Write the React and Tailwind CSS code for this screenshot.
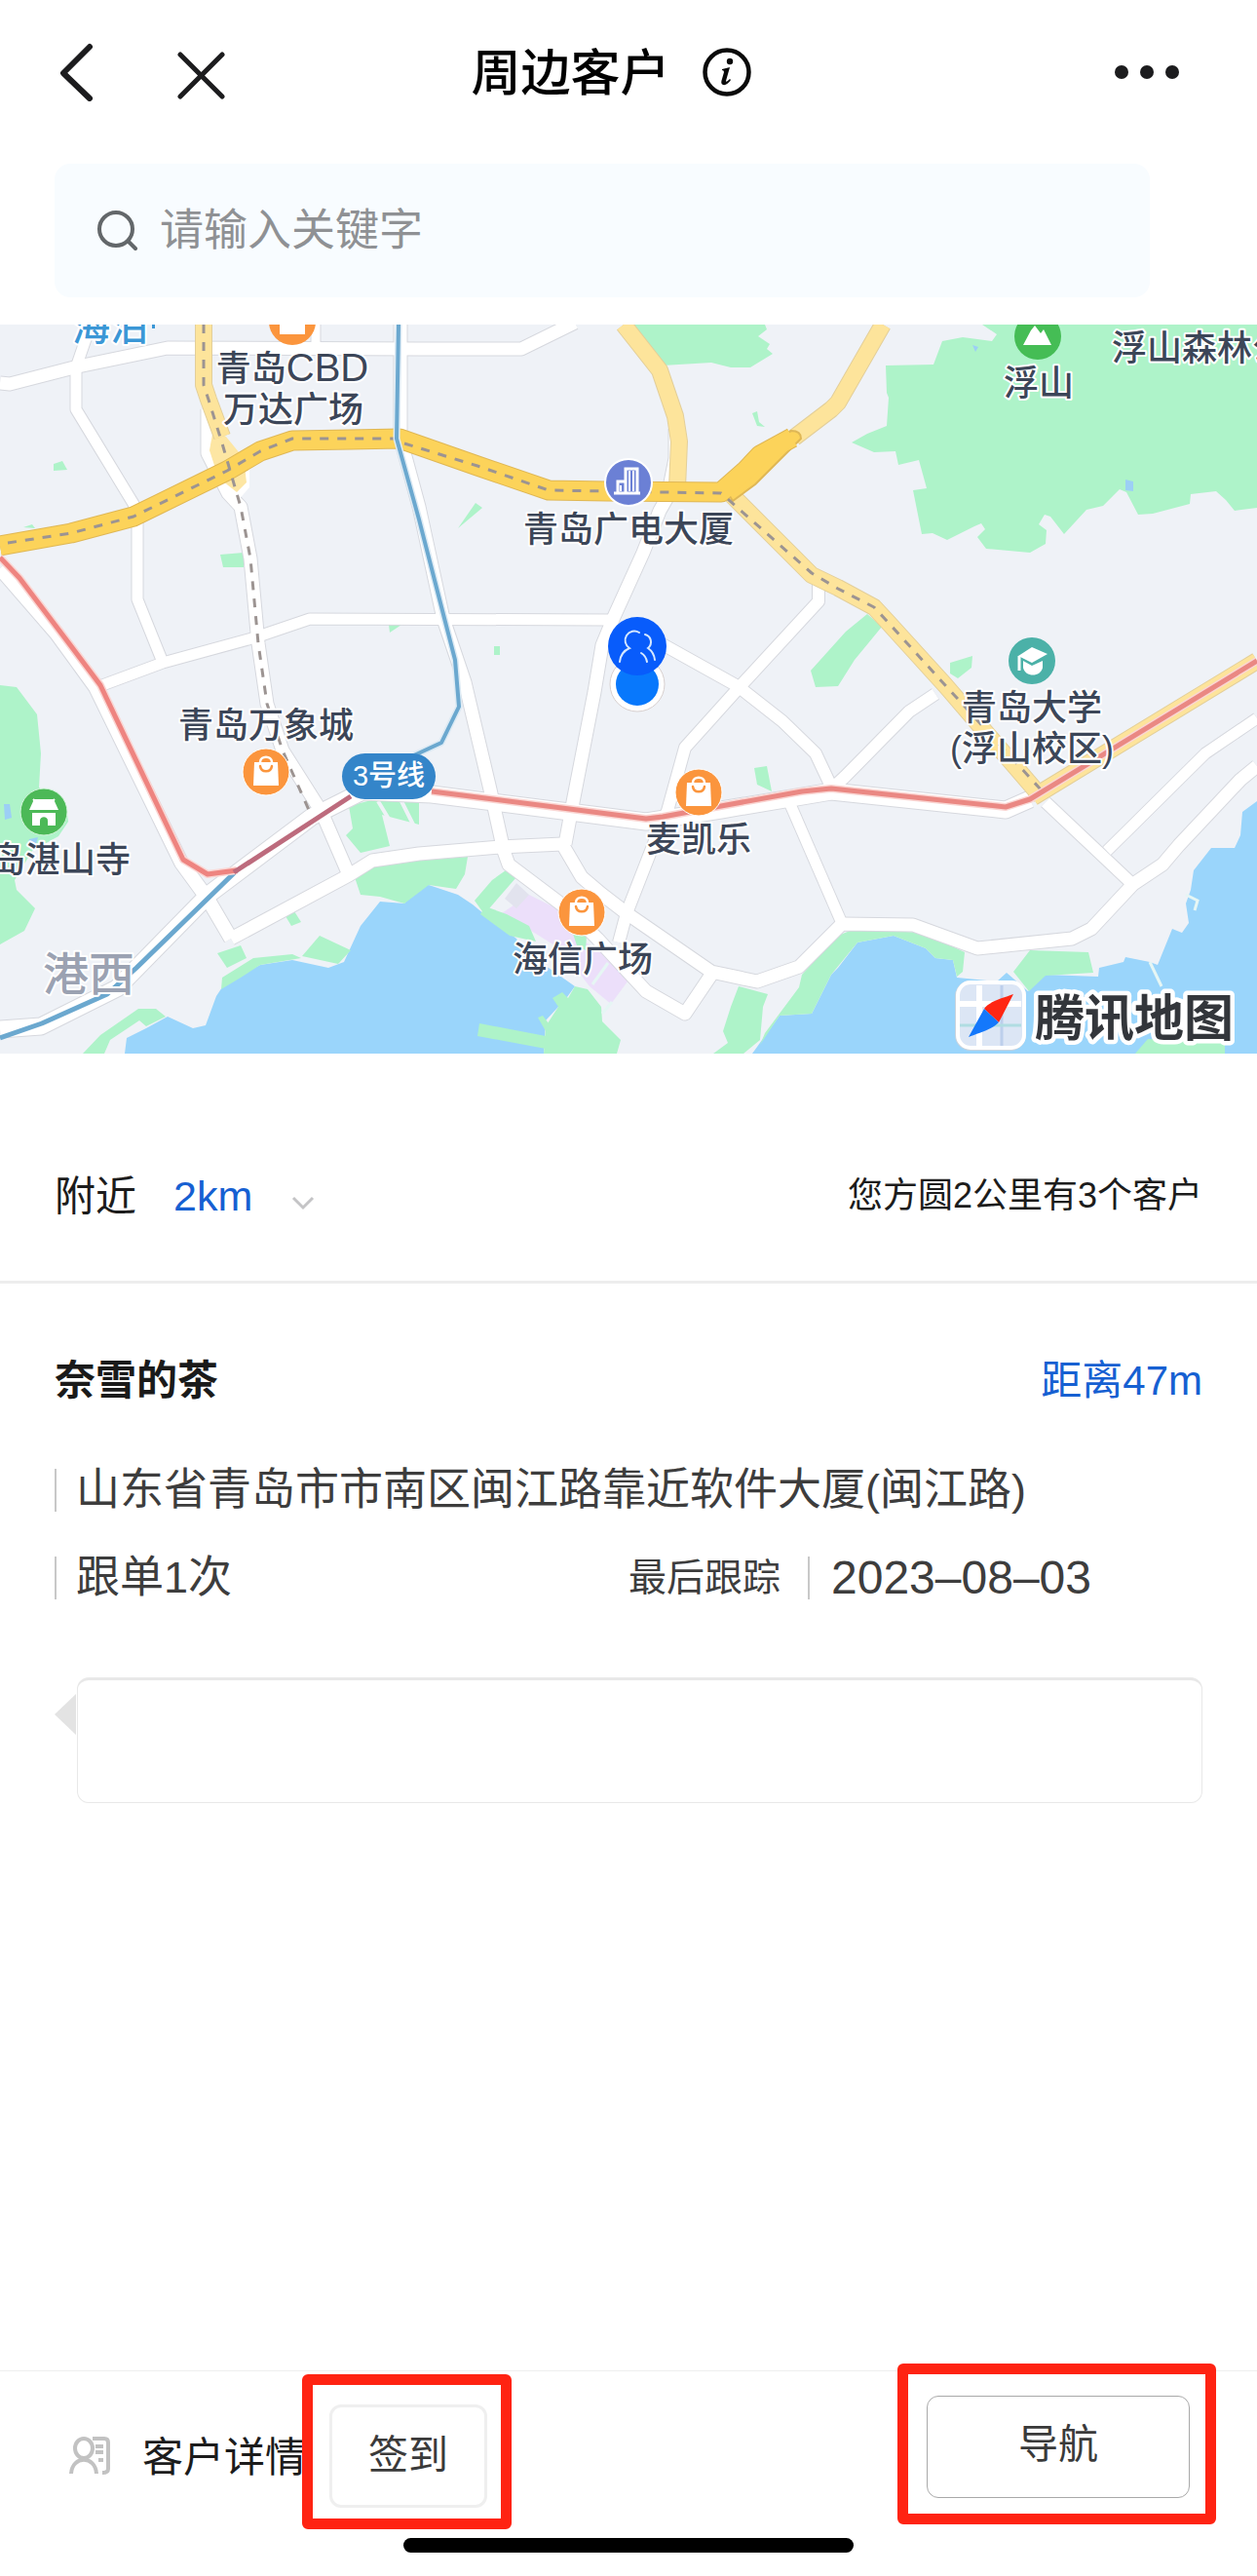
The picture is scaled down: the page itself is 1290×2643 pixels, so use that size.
import React from "react";

const WATER = "#9ad5fb";
const PARK = "#aef3c9";

const waterAreas = [
  "M128 1081L130 1065L150 1055L172 1043L198 1055L211 1052L222 1022L230 1010L267 990L300 985L337 993L353 987L370 950L390 925L415 927L430 910L440 908L470 918L485 928L497 938L530 963L545 985L563 993L590 1012L582 1023L573 1033L560 1047L558 1081Z",
  "M772 1081L800 1042L833 1040L853 1000L860 993L880 967L917 960L950 973L960 983L978 985L982 1003L1023 1007L1033 998L1055 1017L1073 1000L1127 1002L1128 993L1153 987L1155 982L1180 987L1188 990L1203 953L1213 957L1220 947L1217 927L1222 913L1225 893L1243 870L1267 870L1273 857L1275 833L1290 822V1081Z",
];

const parkAreas = [
  "M1008 333L1023 343L1018 350L988 346L967 350L958 374L909 375L910 403L912 408L910 437L890 445L874 454L897 464L919 463L922 477L943 472L951 501L937 503L946 548L957 547L972 554L1000 540L1007 537L1011 543L1003 551L1012 563L1057 567L1073 558L1074 544L1066 538L1072 528L1078 530L1092 548L1115 523L1132 519L1149 502L1156 505L1168 528L1183 527L1221 517L1222 507L1248 504L1258 513L1267 524L1290 521V333Z",
  "M650 333L668 363L680 375L730 372L750 377L770 377L793 363L787 358L790 353L778 345L787 338L785 333Z",
  "M0 703L17 705L38 733L42 773L40 808L68 827L70 843L60 858L33 873L15 903L17 913L36 932L25 955L0 969Z",
  "M85 1081L103 1062L142 1035L160 1035L170 1043L150 1053L143 1047L113 1067L107 1081Z",
  "M358 827L385 820L430 820V846L392 836L400 868L370 875L355 857L362 850Z",
  "M363 897L387 887L430 883L480 879L477 897L468 912L440 908L415 927L390 920L370 918Z",
  "M328 960L360 975L347 989L310 981Z",
  "M223 978L247 970L253 983L233 993Z",
  "M227 1015L228 1003L260 983L300 979L309 983L267 990L247 1003Z",
  "M293 940L302 935L309 946L299 950Z",
  "M519 893L530 900L497 938L487 924L505 903Z",
  "M498 930L520 938L543 950L550 966L523 960L493 938Z",
  "M590 1012L603 1015L617 1033L618 1048L637 1067L633 1081H558L560 1053L573 1033L567 1024L577 1018L583 1024Z",
  "M492 1050L560 1063V1076L490 1063Z",
  "M552 1044L557 1042L566 1054L560 1058Z",
  "M588 958L602 960L601 975L592 970Z",
  "M758 1012L788 1020L783 1033L780 1067L763 1081H732L747 1070L742 1058L750 1033Z",
  "M860 960L823 1000L820 1013L785 1060L780 1072L800 1042L833 1040L853 1000L880 967L917 960L950 973L960 983L978 985L982 1002L988 997L990 977L947 957L877 953Z",
  "M1057 975L1117 977L1122 998L1073 1001L1056 1017L1040 997Z",
  "M1165 1081L1178 1066L1257 1070L1257 1081Z",
  "M55 476L64 473L69 482L55 483Z",
  "M24 541L33 538L36 542Z",
  "M226 569L250 567V582L229 582Z",
  "M399 641H412L400 649Z",
  "M488 516L495 521L470 542Z",
  "M507 663H513V672H507Z",
  "M772 424L777 422L779 433L785 438L777 437Z",
  "M890 630L905 643L877 677L860 704L837 705L832 688L850 668L868 648Z",
  "M975 680L998 673L997 685L983 696L975 691Z",
  "M774 788L787 786L792 812L777 805Z",
];

const localRoads = [
  { d: "M0 393L10 394L80 376L172 357L430 358L535 358L590 331", w: 13 },
  { d: "M89 345L78 377V420L137 517L141 537V615L166 677", w: 11 },
  { d: "M105 703L167 680L262 654L318 635L625 636", w: 11 },
  { d: "M213 420V465L234 506L247 520L257 573L265 660L274 722L290 770L330 833L356 893", w: 13 },
  { d: "M0 583L58 650L98 705L186 885L213 922L237 963", w: 14 },
  { d: "M237 963L358 898L382 883L430 876L513 869L577 866L597 900L617 917L643 937L730 997L777 1007L820 992L864 948L937 949L1003 973L1100 963L1120 953L1163 907L1193 887L1210 867L1273 800L1290 786", w: 13 },
  { d: "M0 1056L42 1053L120 1014L215 917L320 838L372 812L443 815L663 843L740 831L853 812L1032 831L1057 820", w: 17 },
  { d: "M411 333V450L430 520L455 635L477 700L503 810L517 873L522 887L583 933L613 963L663 1017L703 1040L730 1000", w: 13 },
  { d: "M685 510L677 524L660 567L630 633L618 662L610 710L588 823L580 866", w: 13 },
  { d: "M660 650L757 704L803 740L837 773L853 807", w: 12 },
  { d: "M840 597V617L757 707L703 767L685 832L677 850L643 937L635 967", w: 12 },
  { d: "M810 823L863 945", w: 11 },
  { d: "M960 712L933 730L867 797L853 810", w: 12 },
  { d: "M1073 823L1162 907", w: 12 },
  { d: "M1136 873L1237 773L1290 737", w: 11 },
  { d: "M324 333V356", w: 9 },
  { d: "M690 440V470L684 500", w: 7 },
];

const mainRoads = [
  "M209 333V395L214 410L228 448",
  "M640 333L677 380L693 427L697 453L695 500",
  "M815 449L853 420L860 413L906 333",
  "M748 505L833 590L860 603L897 623L910 637L970 703L1068 817",
  "M1060 818L1290 678",
];

const expressway =
  "M0 560L73 547L137 530L233 483L267 463L300 452L360 451L410 450L430 457L490 478L563 503L623 504L740 505L765 483L780 467L813 449";

function Roads({ items, fill, edge }) {
  return (
    <g fill="none" strokeLinejoin="round" strokeLinecap="butt">
      {items.map((r) => (
        <path key={"e" + r.d} d={r.d} stroke={edge} strokeWidth={r.w + 2} />
      ))}
      {items.map((r) => (
        <path key={"f" + r.d} d={r.d} stroke={fill} strokeWidth={r.w} />
      ))}
    </g>
  );
}

function Label({ x, y, children, color = "#3c4658", size = 36, anchor = "middle" }) {
  return (
    <text
      x={x}
      y={y}
      textAnchor={anchor}
      fontSize={size}
      fontWeight="500"
      fill={color}
      stroke="#ffffff"
      strokeWidth="4"
      strokeLinejoin="round"
      paintOrder="stroke"
    >
      {children}
    </text>
  );
}

function ShopPin({ x, y }) {
  return (
    <g transform={`translate(${x} ${y})`}>
      <circle r="24" fill="#fb953d" stroke="#fff" strokeWidth="1" />
      <path d="M-12 -10H12L13 14H-13Z" fill="#fff" strokeLinejoin="round" />
      <path d="M-6 -10C-6 -17 6 -17 6 -10" fill="none" stroke="#fff" strokeWidth="2.5" />
      <path d="M-6 -6C-5 1 5 1 6 -6" fill="none" stroke="#fb953d" strokeWidth="2.5" strokeLinecap="round" />
    </g>
  );
}

function CityMap() {
  return (
    <svg
      role="img"
      aria-label="周边客户地图"
      viewBox="0 333 1290 748"
      className="block h-auto w-full font-['Liberation_Sans','Noto_Sans_CJK_SC',sans-serif]"
    >
      <rect y="333" width="1290" height="748" fill="#eff2f7" />
      {waterAreas.map((d) => (
        <path key={d} d={d} fill={WATER} />
      ))}
      <path d="M543 918L573 933L590 960L630 985L647 1003L627 1030L605 1012L577 975L550 958L515 937Z" fill="#ecdffa" />
      <path d="M530 906L543 918L530 932L518 922Z" fill="#e2e3ee" />
      {parkAreas.map((d) => (
        <path key={d} d={d} fill={PARK} />
      ))}
      <path d="M624 988L608 1010M628 1028L618 1040M1180 987L1192 1012M1217 918L1229 924L1226 934" fill="none" stroke="#e6f6f4" strokeWidth="3" />
      <path d="M388 822L400 842M412 822L424 846" stroke="#eff2f7" strokeWidth="4" />
      <path d="M1155 492L1163 494V504L1155 503Z M998 354L1004 356L1001 361Z M4 825H10L12 839L5 841Z M30 861L39 859L37 866L28 868Z" fill="#9ccff5" />

      <Roads items={localRoads} fill="#ffffff" edge="#d6d8de" />
      <path d="M213 440L211 465L220 490L243 515L256 500V482L233 452Z" fill="#fff" />
      <path d="M219 440L215 462L224 490L243 505L253 495L250 470L232 448Z" fill="#fde6a3" />
      <Roads items={mainRoads.map((d) => ({ d, w: 16 }))} fill="#fde49b" edge="#e3cf9a" />
      <g fill="none" strokeLinejoin="round">
        <path d={expressway} stroke="#dfb755" strokeWidth="21" />
        <path d="M740 495L775 462L812 442Q822 442 822 450L775 497L752 514Z" fill="#fcd35a" stroke="#dfb755" strokeWidth="2" />
        <path d={expressway} stroke="#fcd35a" strokeWidth="19" />
        <g stroke="#9c9492" strokeWidth="3" strokeDasharray="9 9">
          <path d="M8 557L73 547L137 530L233 483L267 463L300 450H405M415 455L490 478L563 503L740 506L833 588L860 604L897 623L910 637L970 703L1068 810" />
          <path d="M209 333V395L214 410L228 455L247 520L257 573L265 660L274 722L290 770L320 838" />
        </g>
        <path d="M409 333L407 450L430 533L467 677L471 725L453 762L425 775" stroke="#dceaf4" strokeWidth="7" />
        <path d="M409 333L407 450L430 533L467 677L471 725L453 762L425 775" stroke="#6ba8cf" strokeWidth="4" />
        <path d="M0 1065L43 1050L110 1020L140 993L243 893" stroke="#6ba8cf" strokeWidth="5" />
        <path d="M0 572L20 593L73 663L103 703L188 882L213 897L243 893" stroke="#fad6d3" strokeWidth="8" />
        <path d="M0 572L20 593L73 663L103 703L188 882L213 897L243 893" stroke="#ee8480" strokeWidth="5" />
        <path d="M240 895L360 817" stroke="#bd6b7d" strokeWidth="5" />
        <path d="M443 812L663 840L680 838L740 827L823 812L853 809L1032 828L1057 820L1290 678" stroke="#fad6d3" strokeWidth="8" />
        <path d="M443 812L663 840L680 838L740 827L823 812L853 809L1032 828L1057 820L1290 678" stroke="#ea8883" strokeWidth="5" />
      </g>

      <Label x="74" y="349" size={39} color="#3b97d6" anchor="start">
        海泊
      </Label>
      <path d="M156 333H159V337H156Z" fill="#3b97d6" />

      <circle cx="300" cy="330" r="24" fill="#fb953d" />
      <path d="M287 333H313V343H287Z" fill="#fff" />
      <Label x="300" y="391">
        青岛<tspan fontSize="40">CBD</tspan>
      </Label>
      <Label x="301" y="433">万达广场</Label>

      <g transform="translate(645 495)">
        <circle r="24" fill="#6b80d5" stroke="#fff" strokeWidth="2" />
        <path d="M-15 11H12M-11 11V-1H-3M-3 11V-14H9V11" fill="none" stroke="#fff" strokeWidth="3" />
        <path d="M1 -12V9M5 -12V9M-8 3V9" stroke="#fff" strokeWidth="2" />
      </g>
      <Label x="645" y="556">青岛广电大厦</Label>

      <g transform="translate(1065 345)">
        <circle r="24" fill="#45bd55" />
        <path d="M-15 9L-7 -6L-3 -11L3 -3L6 -7L14 9Z" fill="#fff" />
      </g>
      <Label x="1066" y="406">浮山</Label>
      <Label x="1141" y="370" anchor="start">浮山森林公园</Label>

      <g transform="translate(1059 678)">
        <circle r="24" fill="#4bb1a8" />
        <path d="M0 -14L16 -7L0 2L-14 -5Z" fill="#fff" />
        <path d="M-9 0L0 5L11 0V7C9 17 -7 17 -9 7Z" fill="#fff" />
        <path d="M-13 -5V10" stroke="#fff" strokeWidth="3" />
      </g>
      <Label x="1059" y="739">青岛大学</Label>
      <Label x="1059" y="781">(浮山校区)</Label>

      <ShopPin x="273" y="792" />
      <Label x="273" y="757">青岛万象城</Label>
      <ShopPin x="717" y="813" />
      <Label x="717" y="874">麦凯乐</Label>
      <ShopPin x="597" y="936" />
      <Label x="598" y="997">海信广场</Label>

      <g transform="translate(45 833)">
        <circle r="24" fill="#4cb957" stroke="#d4f5dc" strokeWidth="1" />
        <path d="M-10 -13H10L15 -2H-15Z" fill="#fff" />
        <path d="M-12 1H12V14H4V9C4 4 -4 4 -4 9V14H-12Z" fill="#fff" />
        <path d="M-11 -13L-8 -10H8L11 -13" stroke="#fff" strokeWidth="2" fill="none" />
      </g>
      <Label x="134" y="895" anchor="end">青岛湛山寺</Label>
      <Label x="91" y="1016" size={47} color="#9ba2b2">港西</Label>

      <rect x="351" y="773" width="96" height="47" rx="23.5" fill="#3485c9" />
      <text x="399" y="806" textAnchor="middle" fontSize="29" fontWeight="500" fill="#fff">
        3号线
      </text>

      <circle cx="654" cy="702" r="28" fill="#fff" stroke="#d8d0cf" strokeWidth="1" />
      <circle cx="654" cy="702" r="22" fill="#0878fc" />
      <circle cx="654" cy="663" r="30" fill="#085cfb" />
      <g fill="none" stroke="#d5e8ff" strokeWidth="2" strokeLinecap="round">
        <path d="M656 649A9 9 0 1 0 646 665Q637 669 636 679" />
        <path d="M662 651A8 8 0 0 1 665 665Q671 669 672 677" />
        <path d="M658 670Q663 673 664 679" />
      </g>

      <rect x="980" y="1006" width="73" height="72" rx="16" fill="#c9d3dd" />
      <rect x="983" y="1008" width="68" height="67" rx="13" fill="#dce6f5" stroke="#fff" strokeWidth="4" />
      <path d="M1005 1011V1073M985 1030H1048" stroke="#fff" strokeWidth="6" />
      <path d="M1028 1011V1073" stroke="#bdcfec" strokeWidth="3" />
      <path d="M985 1052H1048" stroke="#b0dde2" strokeWidth="3" />
      <path d="M1040 1020L1025 1049L1010 1035C1014 1028 1029 1024 1040 1020Z" fill="#ff2613" />
      <path d="M1010 1035L1025 1049C1017 1057 1003 1060 994 1064Z" fill="#1478fb" />
      <text x="1062" y="1063" fontSize="51" fontWeight="700" fill="#33363b" stroke="#fff" strokeWidth="9" strokeLinejoin="round" paintOrder="stroke">
        腾讯地图
      </text>
    </svg>
  );
}

function Header() {
  return (
    <header className="flex h-[148px] items-center pr-[80px] pl-[60px]">
      <div className="flex flex-1 items-center gap-[84px]">
        <button type="button" aria-label="返回">
          <svg width="38" height="60" viewBox="0 0 38 60" fill="none" stroke="#1c1c1e" strokeWidth="6" strokeLinecap="round" strokeLinejoin="round">
            <path d="M32 4L5 31L32 57" />
          </svg>
        </button>
        <button type="button" aria-label="关闭" className="pt-2">
          <svg width="50" height="50" viewBox="0 0 50 50" stroke="#1c1c1e" strokeWidth="5" strokeLinecap="round">
            <path d="M3 3L46 46M46 3L3 46" />
          </svg>
        </button>
      </div>
      <div className="flex items-center gap-[33px] pr-4">
        <h1 className="pt-[3px] text-[51px] leading-[60px] font-medium text-black">周边客户</h1>
        <button type="button" aria-label="说明">
          <svg width="50" height="50" viewBox="0 0 50 50">
            <circle cx="25" cy="25" r="22.5" fill="none" stroke="#0a0a0a" strokeWidth="4.5" />
            <circle cx="28" cy="14" r="3.2" fill="#0a0a0a" />
            <path d="M20 22L28 20L24 34Q24 36 28 32L29 33Q25 39 21 38Q18 37 20 32L22 25Q22 23 20 23Z" fill="#0a0a0a" />
          </svg>
        </button>
      </div>
      <div className="flex flex-1 justify-end">
        <button type="button" aria-label="更多" className="flex gap-3">
          <span className="size-[14px] rounded-full bg-[#1c1c1e]" />
          <span className="size-[14px] rounded-full bg-[#1c1c1e]" />
          <span className="size-[14px] rounded-full bg-[#1c1c1e]" />
        </button>
      </div>
    </header>
  );
}

function SearchBox() {
  return (
    <div className="mt-5 mr-[110px] mb-7 ml-14 flex h-[137px] items-center gap-[22px] rounded-2xl bg-[#f8fcff] pl-[43px]">
      <svg width="43" height="43" viewBox="0 0 43 43" fill="none" stroke="#63676a" strokeWidth="4" strokeLinecap="round">
        <circle cx="20" cy="20" r="17" />
        <path d="M33 33L40 40" />
      </svg>
      <input
        type="text"
        aria-label="请输入关键字"
        placeholder="请输入关键字"
        className="h-full min-w-0 flex-1 bg-transparent text-[45px] text-[#3c3c3c] outline-none placeholder:text-[#8f9194]"
      />
    </div>
  );
}

function RangeFilter() {
  return (
    <section className="mt-[80px] flex h-[156px] items-start justify-between border-b-3 border-[#ededed] pr-14 pl-14">
      <div className="flex h-[132px] items-center">
        <label htmlFor="range" className="text-[42px] text-[#1c1c1c]">
          附近
        </label>
        <div className="relative ml-[38px]">
          <select id="range" className="w-[150px] appearance-none bg-transparent text-[43px] text-[#1660d2] outline-none">
            <option>2km</option>
          </select>
          <svg className="pointer-events-none absolute top-1/2 right-1" width="26" height="16" viewBox="0 0 26 16" fill="none" stroke="#c4c4c6" strokeWidth="3">
            <path d="M3 2L13 12L23 2" />
          </svg>
        </div>
      </div>
      <p className="flex h-[132px] items-center text-[36px] text-[#1c1c1c]">您方圆2公里有3个客户</p>
    </section>
  );
}

function CustomerCard() {
  return (
    <article className="pt-[68px] pr-14 pl-14">
      <div className="flex items-center justify-between text-[42px] leading-[64px]">
        <h2 className="font-bold text-[#1a1a1a]">奈雪的茶</h2>
        <span className="text-[#1660d2]">距离47m</span>
      </div>
      <p className="mt-[58px] border-l-2 border-[#c8c8c8] pl-5 text-[45px] leading-[44px] text-[#3d3d3d]">
        山东省青岛市市南区闽江路靠近软件大厦(闽江路)
      </p>
      <div className="mt-[46px] flex leading-[44px] text-[#3d3d3d]">
        <span className="w-1/2 border-l-2 border-[#c8c8c8] pl-5 text-[45px]">跟单1次</span>
        <span className="mr-7 text-[39px]">最后跟踪</span>
        <time className="border-l-2 border-[#c8c8c8] pl-[22px] text-[48px]">2023–08–03</time>
      </div>
      <div className="mt-20 flex items-start">
        <svg className="mt-[17px]" width="23" height="42" viewBox="0 0 23 42">
          <path d="M22 0V42L0 21Z" fill="#e3e3e3" />
        </svg>
        <div className="h-[129px] flex-1 rounded-xl border border-t-3 border-[#e8e8e8]" />
      </div>
    </article>
  );
}

function Footer() {
  return (
    <footer className="relative mt-auto flex h-[211px] items-start justify-between border-t border-[#efefef] pr-[69px] pl-[71px]">
      <div className="flex items-start">
        <button type="button" className="mt-[54px] flex items-center gap-[33px] text-[42px] text-[#1c1c1c]">
          <svg width="42" height="40" viewBox="0 0 42 40" fill="none" stroke="#c2c2c2" strokeWidth="4">
            <ellipse cx="15" cy="12" rx="9" ry="10" />
            <path d="M2 38C3 19 27 19 28 38M24 2H36Q40 2 40 6V33Q40 37 34 37M27 10H35M27 16H35M30 24H35" />
          </svg>
          <span className="pt-1 leading-[62px]">客户详情</span>
        </button>
        <div className="relative mt-[34px] ml-6">
          <button type="button" className="h-[106px] w-[162px] rounded-xl border-3 border-[#efefef] bg-white text-[41px] text-[#3a3a3a]">
            签到
          </button>
          <span className="pointer-events-none absolute -top-[31px] -right-[25px] -bottom-[22px] -left-[28px] rounded-md border-11 border-[#ff2312]" />
        </div>
      </div>
      <div className="relative mt-[25px]">
        <button type="button" className="h-[105px] w-[270px] rounded-xl border border-[#a9a9a9] bg-white pb-1 text-[41px] text-[#3a3a3a]">
          导航
        </button>
        <span className="pointer-events-none absolute -top-[33px] -right-[27px] -bottom-[27px] -left-[30px] rounded-md border-11 border-[#ff2312]" />
      </div>
      <span className="absolute bottom-6 left-1/2 h-[15px] w-[462px] -translate-x-1/2 rounded-full bg-black" />
    </footer>
  );
}

export default function App() {
  return (
    <main className="flex min-h-screen flex-col bg-white font-['Liberation_Sans','Noto_Sans_CJK_SC',sans-serif]">
      <Header />
      <SearchBox />
      <CityMap />
      <RangeFilter />
      <CustomerCard />
      <Footer />
    </main>
  );
}
